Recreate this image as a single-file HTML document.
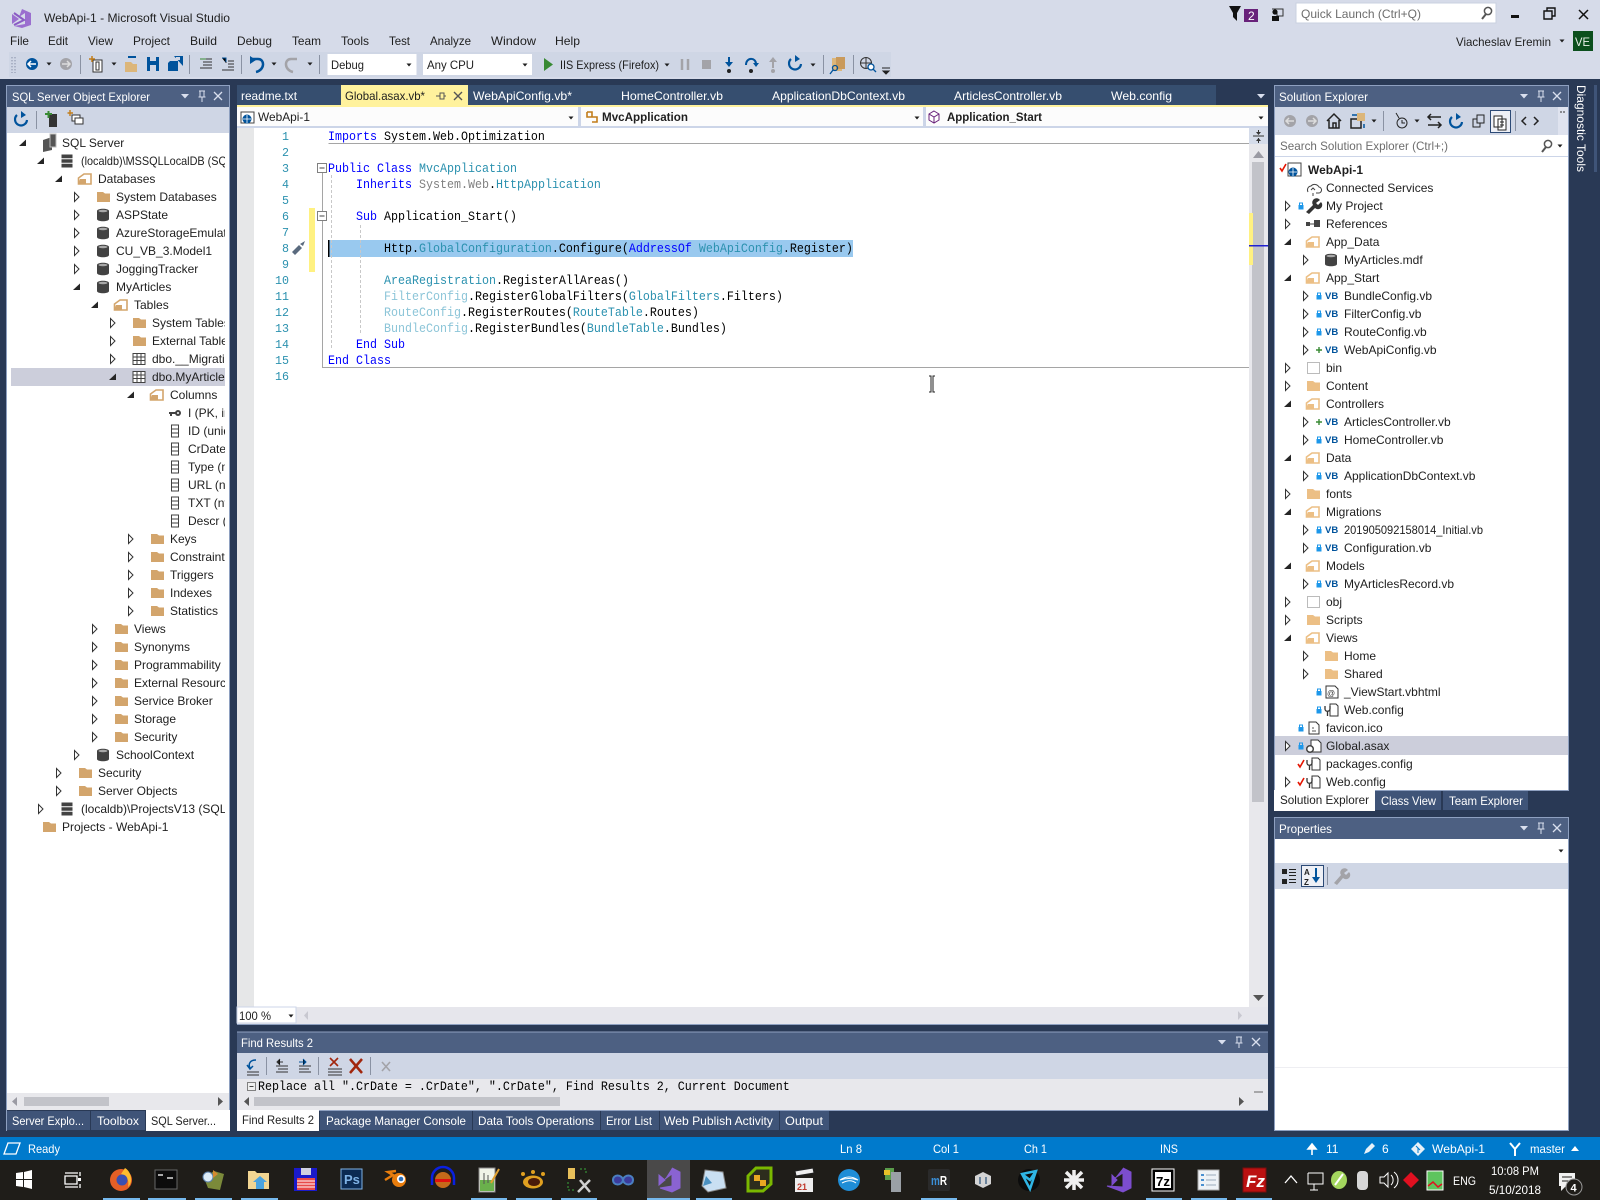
<!DOCTYPE html>
<html lang="en"><head><meta charset="utf-8"><title>WebApi-1 - Microsoft Visual Studio</title>
<style>
html,body{margin:0;padding:0;background:#d6dbe9;width:1600px;height:1200px;overflow:hidden}
svg{display:block}
text{font-family:"Liberation Sans",sans-serif;font-size:12px;fill:#1e1e1e;white-space:pre}
.w text,text.w{fill:#fff}
.mono text,text.mono{font-family:"Liberation Mono",monospace;font-size:13px;fill:#000}
.k{fill:#0000ff}.t{fill:#2b91af}.f{fill:#8cc5d8}.g{fill:#808080}
.ln text{font-family:"Liberation Mono",monospace;font-size:11.67px;fill:#2b91af;text-anchor:end}
</style></head><body>
<svg xmlns="http://www.w3.org/2000/svg" width="1600" height="1200" viewBox="0 0 1600 1200">
<defs>
<clipPath id="lc"><rect x="11" y="133" width="214" height="960"/></clipPath>
<g id="ac"><path d="M-2.5,-4.5 L2,0 L-2.5,4.5 Z" fill="#fff" stroke="#333" stroke-width="1"/></g>
<g id="ao"><path d="M3,-3.5 V3 H-4 Z" fill="#262626"/></g>
<g id="fc"><path d="M-7,-5 H-1 L1,-3.5 H6 V5 H-7 Z" fill="#d3a56c"/></g>
<g id="fo"><path d="M-6.5,-1 L-1,-5 H6 V5 H-6.5 Z" fill="#fff" stroke="#d3a56c" stroke-width="1.6"/><path d="M-7,5 L-5,0 H1 V5Z" fill="#d3a56c"/></g>
<g id="fc2"><path d="M-7,-5 H-1 L1,-3.5 H6 V5 H-7 Z" fill="#ecbf85"/></g>
<g id="fo2"><path d="M-6.5,-1 L-1,-5 H6 V5 H-6.5 Z" fill="#fff" stroke="#ecbf85" stroke-width="1.6"/><path d="M-7,5 L-5,0 H1 V5Z" fill="#ecbf85"/></g>
<g id="db"><path d="M-6,-4 V4 C-6,7 6,7 6,4 V-4 C6,-7 -6,-7 -6,-4Z" fill="#424242"/><ellipse cx="0" cy="-4" rx="4.5" ry="1.3" fill="#a8a8a8"/></g>
<g id="tb"><rect x="-6" y="-5.5" width="12" height="11" fill="#fff" stroke="#424242"/><path d="M-6,-2 H6 M-6,1.5 H6 M-2,-5 V5 M2,-5 V5" stroke="#424242" fill="none"/></g>
<g id="cl"><rect x="-3.5" y="-6" width="7" height="12" fill="#fff" stroke="#424242"/><path d="M-3.5,-2 H3.5 M-3.5,2 H3.5" stroke="#424242"/></g>
<g id="key"><circle cx="3" cy="0" r="3" fill="#424242"/><path d="M-6,-1 H1 V1 H-3 V3 H-5 V1 H-6Z" fill="#424242"/><circle cx="3" cy="0" r="1" fill="#fff"/></g>
<g id="srv"><rect x="-5.5" y="-6.5" width="11" height="13" fill="#424242"/><path d="M-5.5,-2.2 H5.5 M-5.5,2.2 H5.5" stroke="#fff"/></g>
<g id="lk"><rect x="-2.5" y="-1" width="5" height="4.5" fill="#1c97ea"/><path d="M-1.5,-1 V-3 H1.5 V-1" stroke="#1c97ea" fill="none"/></g>
<g id="pl"><path d="M-3,0 H3 M0,-3 V3" stroke="#388a34" stroke-width="1.4"/></g>
<g id="ck"><path d="M-3,0 L-1,3 L3,-4" stroke="#e51400" stroke-width="1.6" fill="none"/></g>
<text id="vb" font-size="9.5" font-weight="bold" style="font-size:9.5px;fill:#00539c;font-weight:bold">VB</text>
<g id="cfg"><path d="M-1,-6 H5 L7,-4 V6 H-1Z" fill="#fff" stroke="#333"/><path d="M-6,-4 V-1 C-6,2 -1,2 -1,-1 V-4 M-3.5,1 V6" stroke="#333" stroke-width="1.3" fill="#fff"/></g>
<g id="pin"><path d="M-3,-5 H3 M-2,-5 V1 H2 V-5 M-3.5,1 H3.5 M0,1 V6" stroke="#d9dfee" fill="none"/></g>
<g id="x"><path d="M-4,-4 L4,4 M-4,4 L4,-4" stroke="#d9dfee" stroke-width="1.3"/></g>
<g id="dn"><path d="M-4,-2 H4 L0,2.5Z" fill="#d9dfee"/></g>
<g id="dd"><path d="M-2.5,-1.5 H2.5 L0,1.5Z" fill="#1e1e1e"/></g>
</defs>

<rect width="1600" height="1200" fill="#d6dbe9"/>
<rect y="79" width="1600" height="1058" fill="#293955"/>

<!-- title -->
<path d="M12,14 L19,19 L12,24 Z M22,9 L31,13 V25 L22,28 L14,26 L25,24 V13 L19,17 Z" fill="#9b6fcf"/>
<path d="M14,13 L24,20 L14,25" fill="none" stroke="#8a5cc4" stroke-width="2"/>
<text x="44" y="22" textLength="186" lengthAdjust="spacingAndGlyphs">WebApi-1 - Microsoft Visual Studio</text>
<g>
<text x="10" y="45" textLength="19" lengthAdjust="spacingAndGlyphs">File</text>
<text x="48" y="45" textLength="20" lengthAdjust="spacingAndGlyphs">Edit</text>
<text x="88" y="45" textLength="25" lengthAdjust="spacingAndGlyphs">View</text>
<text x="133" y="45" textLength="37" lengthAdjust="spacingAndGlyphs">Project</text>
<text x="190" y="45" textLength="27" lengthAdjust="spacingAndGlyphs">Build</text>
<text x="237" y="45" textLength="35" lengthAdjust="spacingAndGlyphs">Debug</text>
<text x="292" y="45" textLength="29" lengthAdjust="spacingAndGlyphs">Team</text>
<text x="341" y="45" textLength="28" lengthAdjust="spacingAndGlyphs">Tools</text>
<text x="389" y="45" textLength="21" lengthAdjust="spacingAndGlyphs">Test</text>
<text x="430" y="45" textLength="41" lengthAdjust="spacingAndGlyphs">Analyze</text>
<text x="491" y="45" textLength="45" lengthAdjust="spacingAndGlyphs">Window</text>
<text x="555" y="45" textLength="25" lengthAdjust="spacingAndGlyphs">Help</text>
</g>
<!-- title right -->
<path d="M1229,6 H1241 L1237,13 V21 L1233,17 V13Z" fill="#111"/>
<rect x="1244" y="9" width="14" height="13" fill="#68217a"/><text x="1248" y="20" style="fill:#fff">2</text>
<path d="M1272,9 H1283 V16 H1277 V13" fill="none" stroke="#333"/><circle cx="1275" cy="12" r="2.6" fill="#111"/><path d="M1272,21 V16 H1279 V21Z" fill="#111"/>
<rect x="1296" y="3" width="200" height="20" fill="#fff" stroke="#c9d0e0"/>
<text x="1301" y="18" textLength="120" lengthAdjust="spacingAndGlyphs" style="fill:#6d6d6d">Quick Launch (Ctrl+Q)</text>
<circle cx="1488" cy="11" r="3.6" fill="none" stroke="#555" stroke-width="1.5"/><path d="M1486,14 L1482,19" stroke="#555" stroke-width="2"/>
<rect x="1511" y="15" width="8" height="3" fill="#111"/>
<path d="M1544,11 H1552 V19 H1544Z M1547,11 V8 H1555 V16 H1552" fill="none" stroke="#111" stroke-width="1.4"/>
<path d="M1579,10 L1588,19 M1579,19 L1588,10" stroke="#111" stroke-width="1.5"/>
<text x="1456" y="46" textLength="95" lengthAdjust="spacingAndGlyphs">Viacheslav Eremin</text>
<use href="#dd" x="1562" y="41"/>
<rect x="1573" y="31" width="20" height="20" fill="#0b4f1d"/><text x="1575" y="46" style="fill:#e8f0e8;font-size:12px" textLength="15" lengthAdjust="spacingAndGlyphs">VE</text>

<!-- main toolbar -->
<rect x="9" y="52" width="882" height="25" fill="#cfd6e5"/>
<path d="M12,57 V73 M15,57 V73" stroke="#9aa3b8" stroke-width="1.4" stroke-dasharray="1.4 1.6"/>
<circle cx="32" cy="64" r="6" fill="#00539c"/><path d="M36,64 H29 M31,61 L28,64 L31,67" stroke="#fff" stroke-width="1.5" fill="none"/>
<use href="#dd" x="49" y="64"/>
<circle cx="66" cy="64" r="6" fill="#a3a3a8"/><path d="M62,64 H69 M67,61 L70,64 L67,67" stroke="#ddd" stroke-width="1.5" fill="none"/>
<path d="M80.5,55 V74 M189.5,55 V74 M241.5,55 V74 M319.5,55 V74 M823.5,55 V74 M853.5,55 V74" stroke="#8a92a3"/>
<path d="M93,60 H102 V72 H93Z M96,62 H99 V70 H96Z" fill="#fff" stroke="#333"/><path d="M92,56 V62 M89,59 H95" stroke="#c27d1a" stroke-width="1.5"/>
<use href="#dd" x="114" y="64"/>
<path d="M125,62 H131 L133,64 H137 V72 H125Z" fill="#dcb67a"/><path d="M128,57 H136" stroke="#00539c" stroke-width="2"/>
<path d="M147,57 H159 V71 H147Z" fill="#00539c"/><rect x="150" y="57" width="6" height="4" fill="#cfd6e5"/><rect x="150" y="65" width="6" height="6" fill="#cfd6e5"/>
<path d="M170,61 H178 V71 H168 V63Z M174,56 H183 V66" fill="#00539c"/><rect x="176" y="57" width="4" height="3" fill="#cfd6e5"/>
<path d="M200,59 H212 M203,62 H212 M203,65 H212 M200,68 H212" stroke="#333"/><path d="M200,59 H206" stroke="#388a34"/>
<path d="M222,58 H226 V63 M228,61 H234 M228,64 H234 M228,67 H234 M222,70 H234" stroke="#333"/><path d="M222,58 H226 V62" stroke="#00539c" fill="none"/>
<path d="M252,59 H258 C265,59 265,70 256,72" fill="none" stroke="#00539c" stroke-width="2.5"/><path d="M250,56 V64 L256,60Z" fill="#00539c"/>
<use href="#dd" x="274" y="64"/>
<path d="M297,59 H291 C284,59 284,70 293,72" fill="none" stroke="#a3a3a8" stroke-width="2.5"/>
<use href="#dd" x="310" y="64"/>
<rect x="327.500" y="54" width="89" height="21" fill="#fff"/><text x="331" y="69" textLength="33" lengthAdjust="spacingAndGlyphs">Debug</text><use href="#dd" x="409" y="65"/>
<rect x="423" y="54" width="109" height="21" fill="#fff"/><text x="427" y="69" textLength="47" lengthAdjust="spacingAndGlyphs">Any CPU</text><use href="#dd" x="525" y="65"/>
<path d="M544,58 L553,64.500 L544,71Z" fill="#388a34"/>
<text x="560" y="69" textLength="99" lengthAdjust="spacingAndGlyphs">IIS Express (Firefox)</text><use href="#dd" x="667" y="65"/>
<path d="M682,59 V70 M688,59 V70" stroke="#a3a3a8" stroke-width="2.500"/><rect x="702" y="60" width="9" height="9" fill="#a3a3a8"/>
<path d="M729,57 V64" stroke="#00539c" stroke-width="2"/><path d="M725,62 H733 L729,67Z" fill="#00539c"/><circle cx="729" cy="71" r="2" fill="#222"/>
<path d="M746,65 C746,57 756,57 756,64" stroke="#00539c" stroke-width="2" fill="none"/><path d="M753,63 H759 L756,67Z" fill="#00539c"/><circle cx="751" cy="71" r="2" fill="#222"/>
<path d="M773,68 V60" stroke="#a3a3a8" stroke-width="2"/><path d="M769,62 H777 L773,57Z" fill="#a3a3a8"/><circle cx="773" cy="71" r="2" fill="#a3a3a8"/>
<path d="M791,59 A6,6 0 1 0 801,64" stroke="#00539c" stroke-width="2.200" fill="none"/><path d="M795,55 L800,59 L795,62Z" fill="#00539c"/>
<use href="#dd" x="813" y="65"/>
<rect x="832" y="58" width="10" height="13" fill="#dcb67a"/><rect x="836" y="57" width="9" height="12" fill="#c99a5c"/><circle cx="835" cy="68" r="2.500" fill="none" stroke="#00539c" stroke-width="1.300"/><path d="M833,70 L830,74" stroke="#00539c" stroke-width="1.300"/>
<circle cx="866" cy="63" r="5.500" fill="none" stroke="#333"/><path d="M861,63 H871 M866,58 V68" stroke="#333"/><circle cx="871" cy="67" r="3" fill="#fff" stroke="#00539c" stroke-width="1.300"/><path d="M873,69 L876,72" stroke="#00539c" stroke-width="1.300"/>
<path d="M882,68 H890 M883,71 H889 L886,74Z" stroke="#222" fill="#222"/>

<!-- LEFT PANEL -->
<rect x="6.500" y="85.500" width="223" height="1045" fill="#fff" stroke="#8ea0c0"/>
<rect x="7" y="86" width="222" height="21" fill="#4d6082"/>
<text x="12" y="101" class="w" style="fill:#fff" textLength="138" lengthAdjust="spacingAndGlyphs">SQL Server Object Explorer</text>
<use href="#dn" x="185" y="96"/><use href="#pin" x="202" y="96"/><use href="#x" x="218" y="96"/>
<rect x="7" y="107" width="222" height="26" fill="#cfd6e5"/>
<path d="M17,115 A6,6 0 1 0 27,120" stroke="#00539c" stroke-width="2.200" fill="none"/><path d="M21,111 L26,115 L21,118Z" fill="#00539c"/>
<path d="M36.500,111 V129" stroke="#8a92a3"/>
<rect x="49" y="114" width="8" height="13" fill="#333"/><path d="M45,114 H52 M48.500,111 V118" stroke="#388a34" stroke-width="2"/>
<rect x="72" y="115" width="8" height="6" fill="#fff" stroke="#333"/><rect x="75" y="118" width="8" height="6" fill="#fff" stroke="#333"/><path d="M70,110 V116 M67.500,113 H73" stroke="#c27d1a" stroke-width="1.400"/>
<g clip-path="url(#lc)">
<rect x="11" y="368" width="214" height="18" fill="#cccedb"/>
<use href="#ao" x="23" y="143"/><path d="M43,140 L52,137 V150 L43,152Z" fill="#555"/><path d="M50,134 H56 V147 H50Z" fill="#555" stroke="#bbb"/><text x="62" y="147">SQL Server</text>
<use href="#ao" x="41" y="161"/><use href="#srv" x="67" y="161"/><text x="81" y="165" textLength="152" lengthAdjust="spacingAndGlyphs">(localdb)\MSSQLLocalDB (SQL</text>
<use href="#ao" x="59" y="179"/><use href="#fo" x="85" y="179"/><text x="98" y="183">Databases</text>
<use href="#ac" x="77" y="197"/><use href="#fc" x="104" y="197"/><text x="116" y="201">System Databases</text>
<use href="#ac" x="77" y="215"/><use href="#db" x="103" y="215"/><text x="116" y="219">ASPState</text>
<use href="#ac" x="77" y="233"/><use href="#db" x="103" y="233"/><text x="116" y="237">AzureStorageEmulator</text>
<use href="#ac" x="77" y="251"/><use href="#db" x="103" y="251"/><text x="116" y="255">CU_VB_3.Model1</text>
<use href="#ac" x="77" y="269"/><use href="#db" x="103" y="269"/><text x="116" y="273">JoggingTracker</text>
<use href="#ao" x="77" y="287"/><use href="#db" x="103" y="287"/><text x="116" y="291">MyArticles</text>
<use href="#ao" x="95" y="305"/><use href="#fo" x="121" y="305"/><text x="134" y="309">Tables</text>
<use href="#ac" x="113" y="323"/><use href="#fc" x="140" y="323"/><text x="152" y="327">System Tables</text>
<use href="#ac" x="113" y="341"/><use href="#fc" x="140" y="341"/><text x="152" y="345">External Tables</text>
<use href="#ac" x="113" y="359"/><use href="#tb" x="139" y="359"/><text x="152" y="363">dbo.__MigrationHistory</text>
<use href="#ao" x="113" y="377"/><use href="#tb" x="139" y="377"/><text x="152" y="381">dbo.MyArticles</text>
<use href="#ao" x="131" y="395"/><use href="#fo" x="157" y="395"/><text x="170" y="399">Columns</text>
<use href="#key" x="175" y="413"/><text x="188" y="417">I (PK, int, not null)</text>
<use href="#cl" x="175" y="431"/><text x="188" y="435">ID (uniqueidentifier)</text>
<use href="#cl" x="175" y="449"/><text x="188" y="453">CrDate (date)</text>
<use href="#cl" x="175" y="467"/><text x="188" y="471">Type (nvarchar)</text>
<use href="#cl" x="175" y="485"/><text x="188" y="489">URL (nvarchar)</text>
<use href="#cl" x="175" y="503"/><text x="188" y="507">TXT (nvarchar)</text>
<use href="#cl" x="175" y="521"/><text x="188" y="525">Descr (nvarchar)</text>
<use href="#ac" x="131" y="539"/><use href="#fc" x="158" y="539"/><text x="170" y="543">Keys</text>
<use href="#ac" x="131" y="557"/><use href="#fc" x="158" y="557"/><text x="170" y="561">Constraints</text>
<use href="#ac" x="131" y="575"/><use href="#fc" x="158" y="575"/><text x="170" y="579">Triggers</text>
<use href="#ac" x="131" y="593"/><use href="#fc" x="158" y="593"/><text x="170" y="597">Indexes</text>
<use href="#ac" x="131" y="611"/><use href="#fc" x="158" y="611"/><text x="170" y="615">Statistics</text>
<use href="#ac" x="95" y="629"/><use href="#fc" x="122" y="629"/><text x="134" y="633">Views</text>
<use href="#ac" x="95" y="647"/><use href="#fc" x="122" y="647"/><text x="134" y="651">Synonyms</text>
<use href="#ac" x="95" y="665"/><use href="#fc" x="122" y="665"/><text x="134" y="669">Programmability</text>
<use href="#ac" x="95" y="683"/><use href="#fc" x="122" y="683"/><text x="134" y="687">External Resources</text>
<use href="#ac" x="95" y="701"/><use href="#fc" x="122" y="701"/><text x="134" y="705">Service Broker</text>
<use href="#ac" x="95" y="719"/><use href="#fc" x="122" y="719"/><text x="134" y="723">Storage</text>
<use href="#ac" x="95" y="737"/><use href="#fc" x="122" y="737"/><text x="134" y="741">Security</text>
<use href="#ac" x="77" y="755"/><use href="#db" x="103" y="755"/><text x="116" y="759">SchoolContext</text>
<use href="#ac" x="59" y="773"/><use href="#fc" x="86" y="773"/><text x="98" y="777">Security</text>
<use href="#ac" x="59" y="791"/><use href="#fc" x="86" y="791"/><text x="98" y="795">Server Objects</text>
<use href="#ac" x="41" y="809"/><use href="#srv" x="67" y="809"/><text x="81" y="813">(localdb)\ProjectsV13 (SQL Server</text>
<use href="#fc" x="50" y="827"/><text x="62" y="831">Projects - WebApi-1</text>
</g>
<rect x="7" y="1093" width="222" height="17" fill="#e8e8ec"/>
<path d="M17,1097 L12,1101.500 L17,1106Z" fill="#9a9aa3"/><path d="M218,1097 L223,1101.500 L218,1106Z" fill="#555"/>
<rect x="24" y="1097" width="85" height="9" fill="#c2c3c9"/>
<rect x="7" y="1110" width="222" height="21" fill="#293955"/>
<rect x="7" y="1111" width="83" height="19" fill="#3f5478"/><rect x="91" y="1111" width="54" height="19" fill="#3f5478"/><rect x="146" y="1110" width="84" height="21" fill="#fff"/>
<text x="12" y="1125" style="fill:#fff" textLength="72" lengthAdjust="spacingAndGlyphs">Server Explo...</text>
<text x="97" y="1125" style="fill:#fff" textLength="42" lengthAdjust="spacingAndGlyphs">Toolbox</text>
<text x="151" y="1125" textLength="65" lengthAdjust="spacingAndGlyphs">SQL Server...</text>

<!-- DOC TABS -->
<rect x="237" y="85" width="979" height="20" fill="#364e6f"/>
<rect x="341" y="85" width="127" height="22" fill="#fff29d"/>
<rect x="237" y="105" width="1031" height="2" fill="#fff29d"/>
<g>
<text x="241" y="100" style="fill:#fff" textLength="56" lengthAdjust="spacingAndGlyphs">readme.txt</text>
<text x="345" y="100" textLength="80" lengthAdjust="spacingAndGlyphs">Global.asax.vb*</text>
<path d="M436,96 H440 M440,93 V99 H444 V93 Z M444,96 H446" stroke="#555" fill="none"/>
<path d="M454,92 L462,100 M454,100 L462,92" stroke="#555" stroke-width="1.400"/>
<text x="473" y="100" style="fill:#fff" textLength="99" lengthAdjust="spacingAndGlyphs">WebApiConfig.vb*</text>
<text x="621" y="100" style="fill:#fff" textLength="102" lengthAdjust="spacingAndGlyphs">HomeController.vb</text>
<text x="772" y="100" style="fill:#fff" textLength="133" lengthAdjust="spacingAndGlyphs">ApplicationDbContext.vb</text>
<text x="954" y="100" style="fill:#fff" textLength="108" lengthAdjust="spacingAndGlyphs">ArticlesController.vb</text>
<text x="1111" y="100" style="fill:#fff" textLength="61" lengthAdjust="spacingAndGlyphs">Web.config</text>
</g>
<use href="#dn" x="1261" y="96"/>

<!-- NAV BAR / EDITOR -->
<rect x="237" y="107" width="1031" height="917" fill="#fff"/>
<rect x="237" y="107" width="1031" height="20" fill="#fcfcfc"/>
<rect x="237" y="126" width="1031" height="2" fill="#ccd5e8"/>
<rect x="578" y="107" width="3" height="20" fill="#ccd5e8"/><rect x="923" y="107" width="3" height="20" fill="#ccd5e8"/>
<rect x="241" y="112" width="13" height="11" fill="#fff" stroke="#444"/><circle cx="247" cy="119" r="4.500" fill="#00539c"/><path d="M243,119 H251 M247,115 V123" stroke="#fff" stroke-width=".8"/>
<text x="258" y="121" textLength="52" lengthAdjust="spacingAndGlyphs">WebApi-1</text><use href="#dd" x="571" y="118"/>
<path d="M587,112 L592,112 L592,117 L597,117 L597,122 L592,122 M587,112 V117 H592" stroke="#c27d1a" stroke-width="1.600" fill="none"/>
<text x="602" y="121" style="font-weight:bold" textLength="86" lengthAdjust="spacingAndGlyphs">MvcApplication</text><use href="#dd" x="917" y="118"/>
<path d="M934,111 L939,114 V120 L934,123 L929,120 V114Z M929,114 L934,117 L939,114 M934,117 V123" stroke="#68217a" fill="#fff"/>
<text x="947" y="121" style="font-weight:bold" textLength="95" lengthAdjust="spacingAndGlyphs">Application_Start</text><use href="#dd" x="1261" y="118"/>

<rect x="237" y="128" width="17" height="879" fill="#e6e7e8"/>
<rect x="309" y="208" width="6" height="64" fill="#fff181"/>
<rect x="328" y="240" width="525" height="17" fill="#99c9ef"/>
<path d="M328.500,143.500 H1249 M322.500,173 V367.500 H1249" stroke="#a5a5a5" fill="none"/>
<path d="M331.500,175 V350 M360.500,225 V335" stroke="#c8c8c8" stroke-dasharray="3 2" fill="none"/>
<rect x="317.500" y="163.500" width="9" height="9" fill="#fff" stroke="#808080"/><path d="M319.500,168 H324.500" stroke="#444"/>
<rect x="317.500" y="211.500" width="9" height="9" fill="#fff" stroke="#808080"/><path d="M319.500,216 H324.500" stroke="#444"/>
<rect x="328" y="240" width="1.500" height="17" fill="#000"/>
<path d="M292,252 L299,245 L302,248 L295,255Z M300,244 L305,241 L303,246Z" fill="#5a6a7e"/>
<g class="ln">
<text x="289" y="140">1</text><text x="289" y="156">2</text><text x="289" y="172">3</text><text x="289" y="188">4</text><text x="289" y="204">5</text><text x="289" y="220">6</text><text x="289" y="236">7</text><text x="289" y="252">8</text><text x="289" y="268">9</text><text x="289" y="284">10</text><text x="289" y="300">11</text><text x="289" y="316">12</text><text x="289" y="332">13</text><text x="289" y="348">14</text><text x="289" y="364">15</text><text x="289" y="380">16</text>
</g>
<g class="mono" transform="translate(328,0) scale(.8974,1)" xml:space="preserve">
<text x="0" y="140"><tspan class="k">Imports</tspan> System.Web.Optimization</text>
<text x="0" y="172"><tspan class="k">Public</tspan> <tspan class="k">Class</tspan> <tspan class="t">MvcApplication</tspan></text>
<text x="31.200" y="188"><tspan class="k">Inherits</tspan> <tspan class="g">System.Web</tspan>.<tspan class="t">HttpApplication</tspan></text>
<text x="31.200" y="220"><tspan class="k">Sub</tspan> Application_Start()</text>
<text x="62.400" y="252">Http.<tspan class="t">GlobalConfiguration</tspan>.Configure(<tspan class="k">AddressOf</tspan> <tspan class="t">WebApiConfig</tspan>.Register)</text>
<text x="62.400" y="284"><tspan class="t">AreaRegistration</tspan>.RegisterAllAreas()</text>
<text x="62.400" y="300"><tspan class="f">FilterConfig</tspan>.RegisterGlobalFilters(<tspan class="t">GlobalFilters</tspan>.Filters)</text>
<text x="62.400" y="316"><tspan class="f">RouteConfig</tspan>.RegisterRoutes(<tspan class="t">RouteTable</tspan>.Routes)</text>
<text x="62.400" y="332"><tspan class="f">BundleConfig</tspan>.RegisterBundles(<tspan class="t">BundleTable</tspan>.Bundles)</text>
<text x="31.200" y="348"><tspan class="k">End</tspan> <tspan class="k">Sub</tspan></text>
<text x="0" y="364"><tspan class="k">End</tspan> <tspan class="k">Class</tspan></text>
</g>
<path d="M929,376 H931 V392 H929 M935,376 H933 V392 H935" stroke="#222" fill="none"/>

<!-- editor scrollbar -->
<rect x="1249" y="128" width="19" height="896" fill="#e8e8ec"/>
<rect x="1249" y="128" width="19" height="16" fill="#d5dcea"/>
<path d="M1253,136 H1264 M1258.500,130 V134 M1258.500,138 V143" stroke="#333"/><path d="M1256,132 L1258.500,135 L1261,132 M1256,141 L1258.500,138 L1261,141" fill="#333"/>
<path d="M1253,156 H1264 L1258.500,149Z" fill="#9a9aa3" transform="translate(0,2)"/>
<rect x="1252" y="162" width="12" height="640" fill="#c2c3c9"/>
<path d="M1253,995 H1264 L1258.500,1001Z" fill="#555"/>
<rect x="1249" y="213" width="4" height="52" fill="#fff181"/>
<rect x="1249" y="245" width="19" height="1.500" fill="#2020d0"/>
<rect x="1249" y="1007" width="19" height="17" fill="#e8e8ec"/>
<!-- hscroll -->
<rect x="237" y="1007" width="1031" height="17" fill="#e6e6ec"/>
<rect x="237" y="1007" width="59" height="16" fill="#fff" stroke="#ccd5e8"/>
<text x="239" y="1020" textLength="32" lengthAdjust="spacingAndGlyphs">100 %</text><use href="#dd" x="291" y="1016"/>
<path d="M308,1011 L304,1015.500 L308,1020Z" fill="#c8c8d0"/><path d="M1238,1011 L1242,1015.500 L1238,1020Z" fill="#c8c8d0"/>
<path d="M237,1024.500 H1268" stroke="#8ea0c0"/>

<!-- FIND RESULTS -->
<rect x="237" y="1032" width="1031" height="78" fill="#e8e8ec"/>
<rect x="237" y="1032" width="1031" height="21" fill="#4d6082"/>
<path d="M237,1032 H1268" stroke="#8ea0c0"/>
<text x="241" y="1047" style="fill:#fff" textLength="72" lengthAdjust="spacingAndGlyphs">Find Results 2</text>
<use href="#dn" x="1222" y="1042"/><use href="#pin" x="1239" y="1042"/><use href="#x" x="1256" y="1042"/>
<rect x="237" y="1053" width="1031" height="26" fill="#cfd6e5"/>
<path d="M266.500,1057 V1075 M318.500,1057 V1075 M370.500,1057 V1075" stroke="#8a92a3"/>
<path d="M247,1072 H259 M247,1075 H259" stroke="#333"/><path d="M256,1060 C250,1060 248,1064 250,1068 M247,1065 L250,1069 L253,1066" stroke="#00539c" stroke-width="1.500" fill="none"/>
<path d="M276,1066 H288 M278,1069 H288 M276,1072 H288 M283,1062 H277 M280,1059 L277,1062 L280,1065" stroke="#333"/>
<path d="M299,1066 H311 M299,1069 H309 M299,1072 H311" stroke="#333"/><path d="M299,1062 H306 M303,1059 L306,1062 L303,1065" stroke="#00539c"/>
<path d="M328,1069 H342 M328,1072 H342 M328,1075 H342" stroke="#333"/><path d="M330,1058 L338,1066 M330,1066 L338,1058" stroke="#a1260d" stroke-width="1.600"/>
<path d="M350,1059 L362,1073 M350,1073 L362,1059" stroke="#a1260d" stroke-width="2.500"/>
<path d="M382,1062 L390,1071 M382,1071 L390,1062" stroke="#a3a3a8" stroke-width="1.600"/>
<rect x="247.500" y="1082.500" width="8" height="8" fill="#eee" stroke="#808080"/><path d="M249.500,1086.500 H253.500" stroke="#444"/>
<text class="mono" transform="translate(258,1090) scale(.8974,1)" x="0" y="0" xml:space="preserve">Replace all ".CrDate = .CrDate", ".CrDate", Find Results 2, Current Document</text>
<rect x="254" y="1097" width="306" height="9" fill="#c2c3c9"/>
<path d="M249,1097 L244,1101.500 L249,1106Z" fill="#555"/><path d="M1239,1097 L1244,1101.500 L1239,1106Z" fill="#555"/>
<path d="M1254,1092 H1263" stroke="#666"/>
<path d="M237,1110.500 H1268" stroke="#8ea0c0"/>
<rect x="237" y="1110" width="82" height="21" fill="#fff"/>
<rect x="320" y="1111" width="152" height="19" fill="#3f5478"/>
<rect x="473" y="1111" width="127" height="19" fill="#3f5478"/>
<rect x="601" y="1111" width="58" height="19" fill="#3f5478"/>
<rect x="660" y="1111" width="119" height="19" fill="#3f5478"/>
<rect x="780" y="1111" width="49" height="19" fill="#3f5478"/>
<text x="242" y="1124" textLength="72" lengthAdjust="spacingAndGlyphs">Find Results 2</text>
<text x="326" y="1125" style="fill:#fff" textLength="140" lengthAdjust="spacingAndGlyphs">Package Manager Console</text>
<text x="478" y="1125" style="fill:#fff" textLength="116" lengthAdjust="spacingAndGlyphs">Data Tools Operations</text>
<text x="606" y="1125" style="fill:#fff" textLength="46" lengthAdjust="spacingAndGlyphs">Error List</text>
<text x="664" y="1125" style="fill:#fff" textLength="109" lengthAdjust="spacingAndGlyphs">Web Publish Activity</text>
<text x="785" y="1125" style="fill:#fff" textLength="38" lengthAdjust="spacingAndGlyphs">Output</text>

<!-- SOLUTION EXPLORER -->
<rect x="1274.500" y="85.500" width="294" height="705" fill="#fff" stroke="#8ea0c0"/>
<rect x="1275" y="86" width="293" height="21" fill="#4d6082"/>
<text x="1279" y="101" style="fill:#fff" textLength="89" lengthAdjust="spacingAndGlyphs">Solution Explorer</text>
<use href="#dn" x="1524" y="96"/><use href="#pin" x="1541" y="96"/><use href="#x" x="1557" y="96"/>
<rect x="1275" y="107" width="293" height="28" fill="#cfd6e5"/>
<rect x="1558" y="107" width="10" height="28" fill="#dfe3ef"/>
<path d="M1561,111 V113 M1564,111 V113" stroke="#333"/>
<circle cx="1290" cy="121" r="6" fill="#a3a3a8"/><path d="M1294,121 H1287 M1289,118 L1286,121 L1289,124" stroke="#ddd" stroke-width="1.500" fill="none"/>
<circle cx="1312" cy="121" r="6" fill="#a3a3a8"/><path d="M1308,121 H1315 M1313,118 L1316,121 L1313,124" stroke="#ddd" stroke-width="1.500" fill="none"/>
<path d="M1327,121 L1334,114 L1341,121 M1329,120 V128 H1339 V120 M1333,128 V123 H1336 V128" stroke="#222" stroke-width="1.500" fill="none"/>
<rect x="1351" y="119" width="10" height="9" fill="none" stroke="#222" stroke-width="1.500"/><rect x="1357" y="113" width="8" height="8" fill="#dcb67a"/><path d="M1352,115 H1357 M1364,124 V128" stroke="#00539c" stroke-width="1.500"/>
<use href="#dd" x="1374" y="121"/>
<path d="M1383.500,111 V131 M1515.500,111 V131" stroke="#8a92a3"/>
<circle cx="1402" cy="123" r="5" fill="none" stroke="#222"/><path d="M1402,120 V123 H1405 M1396,113 L1399,118" stroke="#222" fill="none"/>
<use href="#dd" x="1417" y="121"/>
<path d="M1428,117 H1441 M1431,114 L1428,117 L1431,120 M1428,125 H1441 M1438,122 L1441,125 L1438,128" stroke="#222" stroke-width="1.500" fill="none"/>
<path d="M1452,117 A6,6 0 1 0 1462,122" stroke="#00539c" stroke-width="2.200" fill="none"/><path d="M1456,113 L1461,117 L1456,120Z" fill="#00539c"/>
<rect x="1473" y="119" width="7" height="8" fill="none" stroke="#222"/><rect x="1477" y="115" width="7" height="8" fill="#cfd6e5" stroke="#222"/>
<rect x="1490.500" y="110.500" width="20" height="22" fill="#eef0f6" stroke="#2c4a76"/>
<path d="M1494,116 H1502 V127 H1494Z M1498,119 H1506 V130 H1498Z M1500,122 H1504 M1500,125 H1504" fill="#fff" stroke="#222"/>
<path d="M1526,117 L1522,121 L1526,125 M1534,117 L1538,121 L1534,125" stroke="#222" stroke-width="1.500" fill="none"/>
<rect x="1276" y="136" width="291" height="20" fill="#fff"/>
<text x="1280" y="150" style="fill:#6d6d6d" textLength="168" lengthAdjust="spacingAndGlyphs">Search Solution Explorer (Ctrl+;)</text>
<circle cx="1548" cy="144" r="3.600" fill="none" stroke="#555" stroke-width="1.500"/><path d="M1546,147 L1542,152" stroke="#555" stroke-width="2"/>
<use href="#dd" x="1560" y="146"/>
<path d="M1275,156.500 H1568" stroke="#ccd5e8"/>

<rect x="1275" y="736" width="293" height="19" fill="#cccedb"/>
<!-- sol rows -->
<use href="#ck" x="1283" y="168"/><rect x="1288" y="163" width="13" height="13" fill="#fff" stroke="#444"/><circle cx="1293" cy="172" r="4.500" fill="#00539c"/><path d="M1289,172 H1297 M1293,168 V176" stroke="#fff" stroke-width=".8"/>
<text x="1308" y="174" style="font-weight:bold" textLength="55" lengthAdjust="spacingAndGlyphs">WebApi-1</text>
<path d="M1308,192 A4,4 0 0 1 1311,186 A5,5 0 0 1 1319,187 A3,3 0 0 1 1318,193 H1316 M1313,193 V196 M1311,190 L1313,188 L1315,190" fill="none" stroke="#444"/><text x="1326" y="192">Connected Services</text>
<use href="#ac" x="1288" y="206"/><use href="#lk" x="1301" y="206"/><path d="M1306,212 L1313,205 A4,4 0 0 1 1320,200 L1316,203 L1318,205 L1321,202 A4,4 0 0 1 1315,208 L1309,214Z" fill="#333"/><text x="1326" y="210">My Project</text>
<use href="#ac" x="1288" y="224"/><rect x="1306" y="222" width="4" height="4" fill="#444"/><path d="M1310,224 H1317" stroke="#444"/><rect x="1314" y="220" width="6" height="7" fill="#444"/><text x="1326" y="228">References</text>
<use href="#ao" x="1288" y="242"/><use href="#fo2" x="1313" y="242"/><text x="1326" y="246">App_Data</text>
<use href="#ac" x="1306" y="260"/><use href="#db" x="1331" y="260"/><text x="1344" y="264">MyArticles.mdf</text>
<use href="#ao" x="1288" y="278"/><use href="#fo2" x="1313" y="278"/><text x="1326" y="282">App_Start</text>
<use href="#ac" x="1306" y="296"/><use href="#lk" x="1319" y="296"/><use href="#vb" x="1325" y="299"/><text x="1344" y="300">BundleConfig.vb</text>
<use href="#ac" x="1306" y="314"/><use href="#lk" x="1319" y="314"/><use href="#vb" x="1325" y="317"/><text x="1344" y="318">FilterConfig.vb</text>
<use href="#ac" x="1306" y="332"/><use href="#lk" x="1319" y="332"/><use href="#vb" x="1325" y="335"/><text x="1344" y="336">RouteConfig.vb</text>
<use href="#ac" x="1306" y="350"/><use href="#pl" x="1319" y="350"/><use href="#vb" x="1325" y="353"/><text x="1344" y="354">WebApiConfig.vb</text>
<use href="#ac" x="1288" y="368"/><rect x="1307.500" y="362.500" width="12" height="11" fill="#fff" stroke="#777" stroke-dasharray="1 1"/><text x="1326" y="372">bin</text>
<use href="#ac" x="1288" y="386"/><use href="#fc2" x="1314" y="386"/><text x="1326" y="390">Content</text>
<use href="#ao" x="1288" y="404"/><use href="#fo2" x="1313" y="404"/><text x="1326" y="408">Controllers</text>
<use href="#ac" x="1306" y="422"/><use href="#pl" x="1319" y="422"/><use href="#vb" x="1325" y="425"/><text x="1344" y="426">ArticlesController.vb</text>
<use href="#ac" x="1306" y="440"/><use href="#lk" x="1319" y="440"/><use href="#vb" x="1325" y="443"/><text x="1344" y="444">HomeController.vb</text>
<use href="#ao" x="1288" y="458"/><use href="#fo2" x="1313" y="458"/><text x="1326" y="462">Data</text>
<use href="#ac" x="1306" y="476"/><use href="#lk" x="1319" y="476"/><use href="#vb" x="1325" y="479"/><text x="1344" y="480">ApplicationDbContext.vb</text>
<use href="#ac" x="1288" y="494"/><use href="#fc2" x="1314" y="494"/><text x="1326" y="498">fonts</text>
<use href="#ao" x="1288" y="512"/><use href="#fo2" x="1313" y="512"/><text x="1326" y="516">Migrations</text>
<use href="#ac" x="1306" y="530"/><use href="#lk" x="1319" y="530"/><use href="#vb" x="1325" y="533"/><text x="1344" y="534" textLength="139" lengthAdjust="spacingAndGlyphs">201905092158014_Initial.vb</text>
<use href="#ac" x="1306" y="548"/><use href="#lk" x="1319" y="548"/><use href="#vb" x="1325" y="551"/><text x="1344" y="552">Configuration.vb</text>
<use href="#ao" x="1288" y="566"/><use href="#fo2" x="1313" y="566"/><text x="1326" y="570">Models</text>
<use href="#ac" x="1306" y="584"/><use href="#lk" x="1319" y="584"/><use href="#vb" x="1325" y="587"/><text x="1344" y="588">MyArticlesRecord.vb</text>
<use href="#ac" x="1288" y="602"/><rect x="1307.500" y="596.500" width="12" height="11" fill="#fff" stroke="#777" stroke-dasharray="1 1"/><text x="1326" y="606">obj</text>
<use href="#ac" x="1288" y="620"/><use href="#fc2" x="1314" y="620"/><text x="1326" y="624">Scripts</text>
<use href="#ao" x="1288" y="638"/><use href="#fo2" x="1313" y="638"/><text x="1326" y="642">Views</text>
<use href="#ac" x="1306" y="656"/><use href="#fc2" x="1332" y="656"/><text x="1344" y="660">Home</text>
<use href="#ac" x="1306" y="674"/><use href="#fc2" x="1332" y="674"/><text x="1344" y="678">Shared</text>
<use href="#lk" x="1319" y="692"/><path d="M1326,686 H1335 L1338,689 V698 H1326Z" fill="#fff" stroke="#333"/><text x="1327" y="696" style="font-size:8px;fill:#333">@</text><text x="1344" y="696">_ViewStart.vbhtml</text>
<use href="#lk" x="1319" y="710"/><use href="#cfg" x="1331" y="710"/><text x="1344" y="714">Web.config</text>
<use href="#lk" x="1301" y="728"/><path d="M1309,722 H1316 L1319,725 V734 H1309Z" fill="#fff" stroke="#333"/><path d="M1312,728 H1314 M1312,731 H1316" stroke="#555"/><text x="1326" y="732">favicon.ico</text>
<use href="#ac" x="1288" y="746"/><use href="#lk" x="1301" y="746"/><path d="M1311,740 H1318 L1321,743 V752 H1311Z" fill="#fff" stroke="#333"/><circle cx="1310" cy="749" r="3.300" fill="#fff" stroke="#444" stroke-width="1.500"/><text x="1326" y="750">Global.asax</text>
<use href="#ck" x="1301" y="764"/><use href="#cfg" x="1313" y="764"/><text x="1326" y="768">packages.config</text>
<use href="#ac" x="1288" y="782"/><use href="#ck" x="1301" y="782"/><use href="#cfg" x="1313" y="782"/><text x="1326" y="786">Web.config</text>
<!-- sol tabs -->
<rect x="1274" y="790" width="101" height="21" fill="#fff"/>
<rect x="1375" y="791" width="66" height="19" fill="#3f5478"/><rect x="1443" y="791" width="85" height="19" fill="#3f5478"/>
<text x="1280" y="804" textLength="89" lengthAdjust="spacingAndGlyphs">Solution Explorer</text>
<text x="1381" y="805" style="fill:#fff" textLength="55" lengthAdjust="spacingAndGlyphs">Class View</text>
<text x="1449" y="805" style="fill:#fff" textLength="74" lengthAdjust="spacingAndGlyphs">Team Explorer</text>

<!-- PROPERTIES -->
<rect x="1274.500" y="817.500" width="294" height="313" fill="#fff" stroke="#8ea0c0"/>
<rect x="1275" y="818" width="293" height="21" fill="#4d6082"/>
<text x="1279" y="833" style="fill:#fff" textLength="53" lengthAdjust="spacingAndGlyphs">Properties</text>
<use href="#dn" x="1524" y="828"/><use href="#pin" x="1541" y="828"/><use href="#x" x="1557" y="828"/>
<use href="#dd" x="1561" y="851"/>
<rect x="1275" y="863" width="293" height="26" fill="#cfd6e5"/>
<rect x="1282" y="869" width="5" height="5" fill="#222"/><rect x="1282" y="879" width="5" height="5" fill="#222"/>
<path d="M1289,869.500 H1296 M1289,872.500 H1296 M1289,875.500 H1296 M1289,879.500 H1296 M1289,882.500 H1296" stroke="#222"/>
<rect x="1301.500" y="865.500" width="22" height="21" fill="#eef0f6" stroke="#2c4a76"/>
<text x="1304" y="875" style="font-size:8px;font-weight:bold;fill:#222">A</text><text x="1304" y="885" style="font-size:8px;font-weight:bold;fill:#222">Z</text>
<path d="M1316,868 V879" stroke="#00539c" stroke-width="2"/><path d="M1312,877 H1320 L1316,883Z" fill="#00539c"/>
<path d="M1327.500,867 V885" stroke="#8a92a3"/>
<path d="M1334,883 L1341,875 A4,4 0 0 1 1348,870 L1344,873 L1346,875 L1349,872 A4,4 0 0 1 1343,878 L1337,885Z" fill="#a3a3a8"/>
<path d="M1275,1067.500 H1568" stroke="#eeeef2"/>

<!-- DIAGNOSTIC -->
<rect x="1594" y="85" width="3" height="87" fill="#3f5478"/>
<text transform="translate(1577,85) rotate(90)" style="fill:#fff" textLength="87" lengthAdjust="spacingAndGlyphs">Diagnostic Tools</text>

<!-- STATUS -->
<rect y="1137" width="1600" height="23" fill="#007acc"/>
<path d="M8,1143 H20 L16,1154 H4Z" fill="none" stroke="#fff" stroke-width="1.300"/>
<g>
<text x="28" y="1153" style="fill:#fff" textLength="32" lengthAdjust="spacingAndGlyphs">Ready</text>
<text x="840" y="1153" style="fill:#fff" textLength="22" lengthAdjust="spacingAndGlyphs">Ln 8</text>
<text x="933" y="1153" style="fill:#fff" textLength="26" lengthAdjust="spacingAndGlyphs">Col 1</text>
<text x="1024" y="1153" style="fill:#fff" textLength="23" lengthAdjust="spacingAndGlyphs">Ch 1</text>
<text x="1160" y="1153" style="fill:#fff" textLength="18" lengthAdjust="spacingAndGlyphs">INS</text>
<text x="1326" y="1153" style="fill:#fff">11</text>
<text x="1382" y="1153" style="fill:#fff">6</text>
<text x="1432" y="1153" style="fill:#fff" textLength="53" lengthAdjust="spacingAndGlyphs">WebApi-1</text>
<text x="1530" y="1153" style="fill:#fff" textLength="35" lengthAdjust="spacingAndGlyphs">master</text>
</g>
<path d="M1312,1155 V1146 M1308,1149 L1312,1144 L1316,1149Z" stroke="#fff" stroke-width="1.600" fill="#fff"/>
<path d="M1364,1154 L1366,1149 L1372,1143 L1375,1146 L1369,1152Z" fill="#e8f1f8"/>
<path d="M1418,1142 L1425,1149 L1418,1156 L1411,1149Z" fill="#e8f1f8"/><path d="M1416,1146 L1420,1150 M1418,1148 V1153" stroke="#007acc"/>
<path d="M1510,1143 L1515,1149 L1520,1143 M1515,1149 V1156" stroke="#fff" stroke-width="2" fill="none"/>
<path d="M1571,1151 H1579 L1575,1146Z" fill="#fff"/>

<!-- TASKBAR -->
<rect y="1160" width="1600" height="40" fill="#1f1d19"/>
<rect x="647" y="1160" width="43" height="40" fill="#4a4949"/>
<g fill="#76b9ed">
<rect x="103" y="1198" width="37" height="2"/><rect x="148" y="1198" width="38" height="2"/><rect x="195" y="1198" width="37" height="2"/><rect x="241" y="1198" width="37" height="2"/><rect x="471" y="1198" width="36" height="2"/><rect x="516" y="1198" width="36" height="2"/><rect x="561" y="1198" width="36" height="2"/><rect x="647" y="1198" width="43" height="2"/><rect x="696" y="1198" width="36" height="2"/><rect x="921" y="1198" width="36" height="2"/><rect x="1146" y="1198" width="36" height="2"/><rect x="1191" y="1198" width="36" height="2"/><rect x="1236" y="1198" width="36" height="2"/>
</g>
<g fill="#fff"><path d="M16,1173 L23,1172 V1179 H16Z M24,1172 L32,1170 V1179 H24Z M16,1180 H23 V1187 L16,1186Z M24,1180 H32 V1189 L24,1187Z"/></g>
<path d="M65,1173 H78 M65,1187 H78 M65,1176 H77 V1184 H65Z M80,1172 V1176 M80,1184 V1188" stroke="#fff" fill="none" stroke-width="1.300"/><rect x="78" y="1178" width="3" height="3" fill="#fff"/>
<circle cx="121" cy="1180" r="11" fill="#e55f26"/><path d="M125,1168 C132,1172 133,1183 128,1187 C130,1178 124,1175 121,1174Z" fill="#fdbb2e"/><circle cx="122" cy="1180" r="5.500" fill="#3a4fb0"/>
<rect x="155" y="1170" width="22" height="19" fill="#0c0c0c" stroke="#666"/><path d="M158,1175 H163 M167,1178 H173" stroke="#ddd" stroke-width="1.500"/>
<path d="M204,1178 L214,1171 L224,1174 L220,1190 L208,1188Z" fill="#7b8a3a"/><circle cx="208" cy="1177" r="5" fill="#dcebf7" stroke="#5a7ea8"/><path d="M213,1170 L218,1174 L213,1178Z" fill="#d48a2f"/>
<path d="M248,1171 H255 L257,1173 H269 V1189 H248Z" fill="#f1d592"/><rect x="256" y="1182" width="8" height="7" fill="#4aa3df"/><path d="M253,1182 H267 L260,1176Z" fill="#4aa3df"/>
<rect x="294" y="1168" width="23" height="23" fill="#1a1acb"/><rect x="301" y="1168" width="10" height="7" fill="#d0d0e0"/><rect x="297" y="1178" width="18" height="12" fill="#e84a4a"/><path d="M297,1181 H315 M297,1184 H315 M297,1187 H315" stroke="#fff"/>
<rect x="341" y="1169" width="21" height="20" fill="#0b2a52" stroke="#7fb2e5"/><text x="344" y="1184" style="fill:#7fb2e5;font-weight:bold;font-size:13px">Ps</text>
<circle cx="399" cy="1180" r="7" fill="#e87d0d"/><circle cx="401" cy="1179" r="4" fill="#fff"/><circle cx="401" cy="1179" r="2.300" fill="#2a6ebb"/><path d="M385,1180 L393,1175 L388,1172 L396,1171" stroke="#e87d0d" stroke-width="2.500" fill="none"/>
<circle cx="443" cy="1180" r="8" fill="#c46a1a"/><path d="M432,1185 V1178 A11,11 0 0 1 454,1178 V1185" fill="none" stroke="#0a20e0" stroke-width="2.500"/><rect x="435" y="1179" width="16" height="3" fill="#e01010"/>
<path d="M479,1168 H495 V1192 H479Z" fill="#f0f3e8" stroke="#888"/><path d="M480,1180 H494 V1191 H480Z" fill="#6ab04c"/><path d="M484,1173 V1184 M488,1175 V1183" stroke="#555"/><path d="M491,1183 L499,1169" stroke="#e0a030" stroke-width="2"/>
<ellipse cx="533" cy="1182" rx="10" ry="6.500" fill="#e0a020"/><ellipse cx="534" cy="1182" rx="6" ry="4" fill="#4a1a0a"/><circle cx="523" cy="1174" r="2" fill="#e0a020"/><circle cx="533" cy="1172" r="2" fill="#e0a020"/><circle cx="543" cy="1174" r="2" fill="#e0a020"/>
<rect x="568" y="1168" width="7" height="11" fill="#e8c05a"/><path d="M580,1180 L590,1192 M590,1180 L578,1192" stroke="#d0d0d0" stroke-width="2.500"/><path d="M568,1182 V1190 H575 M580,1169 H586 V1174" stroke="#3aa83a" stroke-dasharray="2 2" fill="none"/>
<path d="M613,1180 C613,1174 622,1174 623,1180 C624,1186 633,1186 633,1180 C633,1174 624,1174 623,1180 C622,1186 613,1186 613,1180Z" fill="#3b3b9c" stroke="#4a7fc0" stroke-width="2"/>
<path d="M659,1175 L665,1180 L659,1185 Z M672,1168 L680,1172 V1188 L672,1192 L660,1188 L672,1186 V1174 L665,1179 " fill="#8a63d2" stroke="#8a63d2"/>
<path d="M705,1170 L723,1172 L726,1188 L708,1192 L702,1186Z" fill="#c9dff2" stroke="#888"/><path d="M706,1176 L703,1186 L712,1183Z" fill="#4a90c0"/>
<path d="M748,1176 L756,1168 H771 V1184 L763,1191 H748Z" fill="#2d2d1d" stroke="#7ab800" stroke-width="3"/><rect x="754" y="1175" width="6" height="6" fill="#e8a822"/><rect x="760" y="1180" width="6" height="6" fill="#e8a822"/>
<rect x="795" y="1178" width="18" height="14" fill="#eee"/><path d="M795,1171 L813,1168 L814,1173 L796,1176Z" fill="#eee" stroke="#222"/><text x="797" y="1190" style="font-size:9px;fill:#c0392b;font-weight:bold">21</text>
<circle cx="849" cy="1180" r="11" fill="#1f8dd6"/><path d="M840,1180 C846,1176 852,1176 858,1180 C852,1178 846,1178 840,1180Z M842,1183 C848,1180 852,1180 856,1183" stroke="#fff" fill="none"/>
<rect x="885" y="1168" width="9" height="12" fill="#5a9c4a"/><rect x="891" y="1172" width="10" height="20" fill="#9aa0a6"/><rect x="884" y="1170" width="6" height="5" fill="#e8c028"/>
<rect x="928" y="1169" width="22" height="22" rx="2" fill="#2a2a2a"/><text x="931" y="1185" style="fill:#fff;font-weight:bold;font-size:13px" textLength="16" lengthAdjust="spacingAndGlyphs"><tspan style="fill:#3a8fd8">m</tspan>R</text>
<path d="M975,1176 L983,1172 L991,1176 V1184 L983,1188 L975,1184Z" fill="#d4d4d4"/><path d="M980,1177 V1184 M986,1177 V1184" stroke="#4a6a8a" stroke-width="1.500"/>
<circle cx="1029" cy="1180" r="11" fill="#0c0c0c"/><path d="M1022,1174 L1036,1171 L1030,1189Z M1022,1174 L1030,1180 L1036,1171" fill="none" stroke="#2fb5e5" stroke-width="2.500"/>
<path d="M1066,1172 L1082,1188 M1082,1172 L1066,1188 M1064,1180 H1084 M1074,1170 V1190" stroke="#f0f0f0" stroke-width="3.500"/>
<path d="M1112,1175 L1117,1180 L1112,1185 Z M1123,1168 L1131,1172 V1188 L1123,1192 L1107,1186 L1123,1187 V1173 L1115,1178" fill="#7c4dce" stroke="#7c4dce"/>
<rect x="1152" y="1169" width="22" height="22" fill="#000" stroke="#fff"/><rect x="1155" y="1172" width="16" height="16" fill="#fff"/><text x="1156" y="1186" style="font-size:13px;font-weight:bold;fill:#000" textLength="14" lengthAdjust="spacingAndGlyphs">7z</text>
<rect x="1198" y="1170" width="21" height="20" fill="#eef2f6" stroke="#aaa"/><path d="M1206,1175 H1216 M1206,1180 H1216 M1206,1185 H1216" stroke="#9ab"/><path d="M1201,1175 H1204 M1201,1180 H1204 M1201,1185 H1204" stroke="#4a90d0" stroke-width="2"/>
<rect x="1243" y="1168" width="23" height="24" fill="#bb1111" stroke="#7a0d0d"/><text x="1246" y="1187" style="fill:#fff;font-weight:bold;font-style:italic;font-size:17px">Fz</text>
<path d="M1285,1183 L1291,1176 L1297,1183" stroke="#fff" stroke-width="1.300" fill="none"/>
<path d="M1308,1173 H1323 V1184 H1314 V1190 M1308,1173 V1184 H1314 M1310,1190 H1318" stroke="#fff" fill="none"/>
<ellipse cx="1339" cy="1180" rx="8" ry="9" fill="#a4d65e"/><path d="M1335,1185 L1343,1174" stroke="#fff" stroke-width="2"/>
<rect x="1357" y="1171" width="11" height="19" rx="4" fill="#d7d7d7"/>
<path d="M1380,1177 H1384 L1388,1173 V1187 L1384,1183 H1380Z M1391,1175 A7,7 0 0 1 1391,1185 M1394,1172 A10,10 0 0 1 1394,1188" stroke="#fff" fill="none"/>
<path d="M1411,1172 L1419,1180 L1411,1188 L1403,1180Z" fill="#e01020"/>
<rect x="1427" y="1171" width="16" height="19" fill="#5ec45e" stroke="#fff"/><path d="M1428,1186 L1433,1182 L1438,1187 L1442,1184" stroke="#e01020" stroke-width="1.500" fill="none"/>
<text x="1453" y="1185" style="fill:#fff" textLength="23" lengthAdjust="spacingAndGlyphs">ENG</text>
<text x="1491" y="1175" style="fill:#fff" textLength="48" lengthAdjust="spacingAndGlyphs">10:08 PM</text>
<text x="1489" y="1194" style="fill:#fff" textLength="52" lengthAdjust="spacingAndGlyphs">5/10/2018</text>
<path d="M1559,1173 H1575 V1186 H1566 L1561,1191 V1186 H1559Z" fill="#f2f2f2"/><path d="M1562,1177 H1572 M1562,1181 H1572" stroke="#1f1d19"/>
<circle cx="1574" cy="1187" r="8" fill="#1f1d19" stroke="#999"/><text x="1570.500" y="1191.500" style="fill:#fff;font-size:11px;font-weight:bold">4</text>
</svg>
</body></html>
